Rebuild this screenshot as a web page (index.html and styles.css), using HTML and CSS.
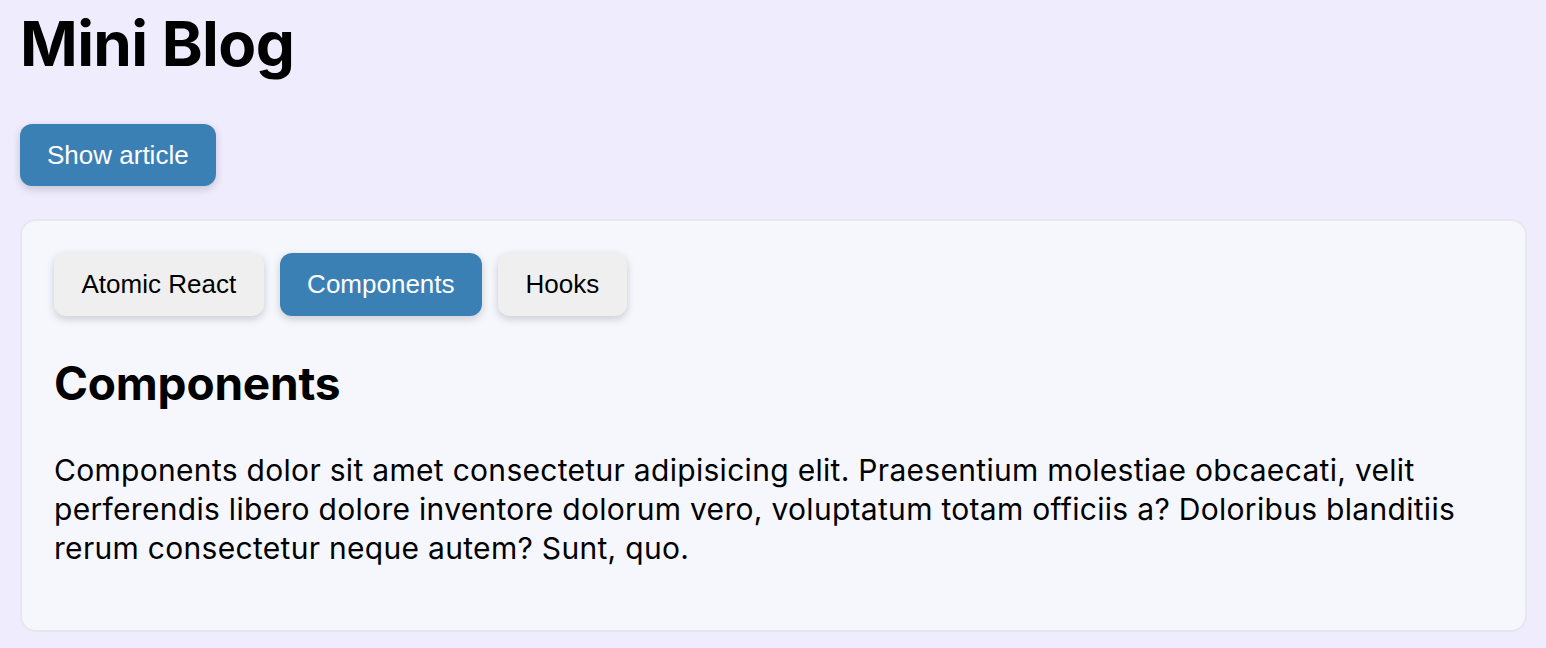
FILE: index.html
```html
<!DOCTYPE html>
<html lang="en">
<head>
<meta charset="utf-8">
<title>Mini Blog</title>
<link rel="stylesheet" href="styles.css">
</head>
<body>
<main class="page">
  <h1 class="title">Mini Blog</h1>
  <button class="btn btn-primary btn-show">Show article</button>
  <section class="card">
    <nav class="tabs">
      <button class="btn tab">Atomic React</button>
      <button class="btn tab btn-primary">Components</button>
      <button class="btn tab">Hooks</button>
    </nav>
    <h2 class="article-title">Components</h2>
    <p class="article-text">Components dolor sit amet consectetur adipisicing elit. Praesentium molestiae obcaecati, velit perferendis libero dolore inventore dolorum vero, voluptatum totam officiis a? Doloribus blanditiis rerum consectetur neque autem? Sunt, quo.</p>
  </section>
</main>
</body>
</html>
```
FILE: styles.css
```css
* { box-sizing: border-box; }
html, body { margin: 0; padding: 0; }
body {
  background: #efedfd;
  font-family: Inter, "Noto Sans", sans-serif;
  color: #000;
}
.page {
  padding: 6px 20px 0 20px;
  display: flex;
  flex-direction: column;
  align-items: flex-start;
}
.title {
  font-size: 62px;
  font-weight: 700;
  line-height: 75px;
  margin: 0 0 43px 0;
  letter-spacing: -0.6px;
}
.btn {
  font-family: "Liberation Sans", Arial, sans-serif;
  font-size: 26px;
  border: none;
  border-radius: 12px;
  padding: 0 27px;
  height: 62px;
  line-height: 62px;
  background: #efefef;
  color: #000;
  box-shadow: 0 3px 8px rgba(0, 0, 0, 0.18);
  cursor: pointer;
}
.btn-primary {
  background: #3b80b5;
  color: #fff;
}
.btn-show {
  margin-bottom: 33px;
}
.card {
  align-self: stretch;
  width: 1507px;
  background: #f6f7fd;
  border: 2px solid #e7e7ec;
  border-radius: 16px;
  padding: 32px 32px 32px 32px;
}
.tabs {
  display: flex;
  gap: 16px;
}
.tab {
  height: 63px;
  line-height: 63px;
  padding: 0 27.5px;
}
.article-title {
  font-size: 46px;
  font-weight: 700;
  line-height: 56px;
  margin: 39px 0 40px 0;
  letter-spacing: -0.2px;
}
.article-text {
  font-size: 30px;
  line-height: 39px;
  letter-spacing: 0.3px;
  margin: 0 0 30px 0;
}
```
